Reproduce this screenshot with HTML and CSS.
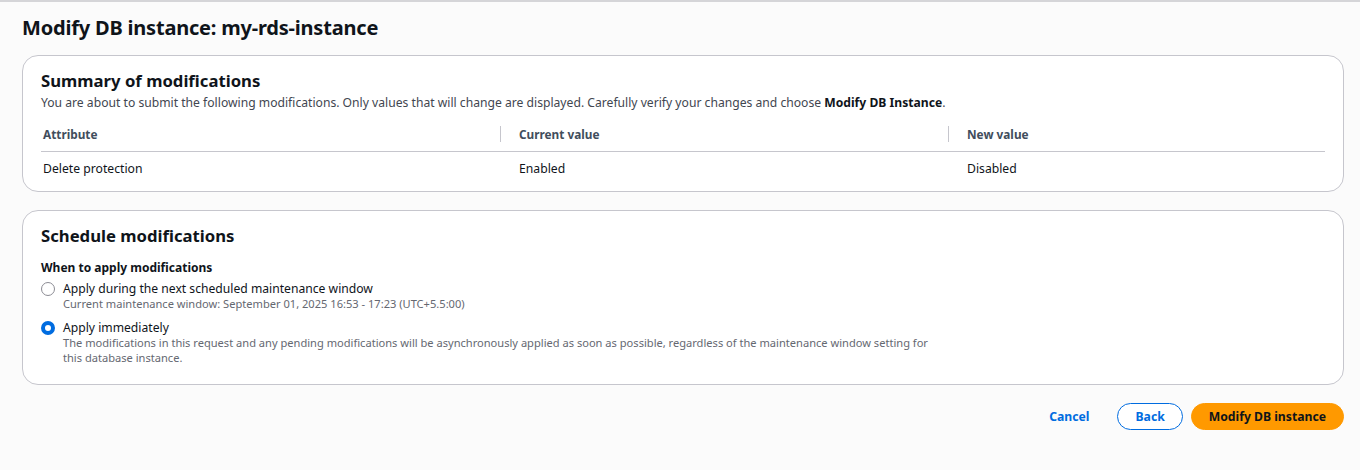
FILE: index.html
```html
<!DOCTYPE html>
<html lang="en">
<head>
<meta charset="utf-8">
<title>Modify DB instance</title>
<link rel="stylesheet" href="styles.css">
</head>
<body>
<div class="page">
  <h1 class="title">Modify DB instance: my-rds-instance</h1>

  <section class="panel summary">
    <h2 class="panel-title">Summary of modifications</h2>
    <p class="panel-desc">You are about to submit the following modifications. Only values that will change are displayed. Carefully verify your changes and choose <b>Modify DB Instance</b>.</p>
    <div class="table">
      <div class="row head">
        <div class="cell c1">Attribute</div>
        <div class="cell c2"><span class="sep"></span>Current value</div>
        <div class="cell c3"><span class="sep"></span>New value</div>
      </div>
      <div class="row body-row">
        <div class="cell c1">Delete protection</div>
        <div class="cell c2">Enabled</div>
        <div class="cell c3">Disabled</div>
      </div>
    </div>
  </section>

  <section class="panel schedule">
    <h2 class="panel-title">Schedule modifications</h2>
    <div class="field-label">When to apply modifications</div>
    <div class="radio">
      <span class="dot"></span>
      <div class="radio-text">
        <div class="radio-label">Apply during the next scheduled maintenance window</div>
        <div class="radio-desc">Current maintenance window: September 01, 2025 16:53 - 17:23 (UTC+5.5:00)</div>
      </div>
    </div>
    <div class="radio">
      <span class="dot checked"></span>
      <div class="radio-text">
        <div class="radio-label">Apply immediately</div>
        <div class="radio-desc narrow">The modifications in this request and any pending modifications will be asynchronously applied as soon as possible, regardless of the maintenance window setting for this database instance.</div>
      </div>
    </div>
  </section>

  <div class="actions">
    <a class="btn-link">Cancel</a>
    <button class="btn btn-normal">Back</button>
    <button class="btn btn-primary">Modify DB instance</button>
  </div>
</div>
</body>
</html>
```
FILE: styles.css
```css
html, body {
  margin: 0;
  padding: 0;
}
body {
  background: #fbfbfb;
  font-family: "Noto Sans", "Open Sans", Arial, sans-serif;
  color: #0f141a;
  border-top: 2px solid #d5d5d8;
}
.page {
  padding: 12px 16px 0 22px;
}
.title {
  margin: 0 0 13px 0;
  font-size: 20px;
  line-height: 28px;
  font-weight: 700;
  letter-spacing: -0.2px;
}
.panel {
  background: #fff;
  border: 1px solid #c6c6cd;
  border-radius: 16px;
  padding: 14px 18px 0 18px;
  margin-bottom: 18px;
}
.panel-title {
  margin: 0;
  font-size: 16.7px;
  line-height: 22px;
  font-weight: 700;
}
.panel-desc {
  margin: 2px 0 0 0;
  font-size: 12.15px;
  line-height: 18px;
  color: #424650;
}
.panel-desc b {
  color: #0f141a;
}
.table {
  margin-top: 5px;
}
.row {
  display: grid;
  grid-template-columns: 459px 448px 1fr;
  font-size: 12.2px;
  line-height: 18px;
}
.row.head {
  font-weight: 700;
  font-size: 11.8px;
  color: #414d5c;
  border-bottom: 1px solid #c6c6cd;
  height: 34px;
  align-items: center;
}
.row.body-row {
  padding: 8px 0 13px 0;
}
.cell {
  display: flex;
  align-items: center;
  padding-left: 2px;
}
.c2, .c3 {
  padding-left: 19px;
  position: relative;
}
.sep {
  position: absolute;
  left: 0;
  top: 50%;
  width: 1px;
  height: 16px;
  margin-top: -8px;
  background: #c6c6cd;
}
.schedule {
  padding-top: 14px;
  padding-bottom: 19px;
}
.field-label {
  margin-top: 12px;
  font-size: 12px;
  line-height: 18px;
  font-weight: 700;
}
.radio {
  display: flex;
  align-items: flex-start;
  gap: 8px;
  margin-top: 4px;
}
.radio + .radio {
  margin-top: 9px;
}
.dot {
  flex: none;
  width: 12px;
  height: 12px;
  border: 1px solid #8c8c94;
  border-radius: 50%;
  background: #fff;
  margin-top: 1px;
}
.dot.checked {
  border: 4px solid #006ce0;
  width: 6px;
  height: 6px;
}
.radio-label {
  font-size: 12.15px;
  line-height: 15px;
}
.radio-desc {
  font-size: 11.1px;
  line-height: 15px;
  color: #656871;
}
.radio-desc.narrow {
  max-width: 865px;
}
.actions {
  display: flex;
  justify-content: flex-end;
  align-items: center;
  gap: 8px;
  margin-top: 18px;
}
.btn-link {
  font-size: 12.2px;
  font-weight: 700;
  color: #006ce0;
  padding: 0 20px;
  cursor: pointer;
}
.btn {
  font-family: inherit;
  font-size: 12.2px;
  font-weight: 700;
  height: 27px;
  border-radius: 20px;
  padding: 0 17px;
  cursor: pointer;
}
.btn-normal {
  background: #fff;
  color: #006ce0;
  border: 1.5px solid #006ce0;
}
.btn-primary {
  background: #ff9900;
  border: 1.5px solid #ff9900;
  color: #0f141a;
}
```
